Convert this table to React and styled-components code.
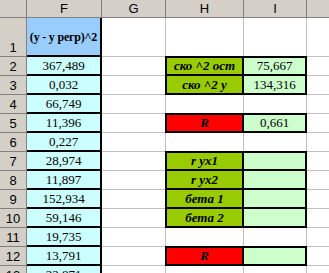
import React from "react";
import styled, { createGlobalStyle } from "styled-components";

const GlobalStyle = createGlobalStyle`
  html, body {
    margin: 0;
    padding: 0;
    overflow: hidden;
    background: #ffffff;
  }
`;

const GREEN = "#99cc00";
const RED = "#ff0000";
const MINT = "#ccffcc";
const AQUA = "#ccffff";
const SKY = "#99ccff";
const GRID = "1px solid #c0c0c0";
const THICK = "2px solid #000000";

const Sheet = styled.div`
  display: grid;
  grid-template-columns: 27px 75px 64px 78px 63px 40px;
  grid-template-rows: 18px 39px repeat(12, 19px);
  width: 347px;
  font-family: "Liberation Serif", "Times New Roman", serif;
  font-size: 13px;
  color: #000;
`;

const Head = styled.div`
  box-sizing: border-box;
  display: flex;
  justify-content: center;
  align-items: ${(p) => (p.$bottom ? "flex-end" : "center")};
  background: #d4d0c8;
  border-right: 1px solid #808080;
  border-bottom: 1px solid #808080;
  font-family: "Liberation Sans", Arial, sans-serif;
  font-size: 13px;
  line-height: 15px;
  padding-bottom: ${(p) => (p.$bottom ? "1px" : "0")};
`;

const Cell = styled.div`
  box-sizing: border-box;
  display: flex;
  justify-content: center;
  align-items: flex-end;
  border-right: ${GRID};
  border-bottom: ${GRID};
  background: ${(p) => p.$bg || "transparent"};
  white-space: nowrap;
  line-height: 16px;
`;

// column F: heavy right edge and heavy rules between the rows
const ValueCell = styled(Cell)`
  border-right: ${THICK};
  border-bottom: ${THICK};
`;

const TitleCell = styled(ValueCell)`
  align-items: center;
  font-weight: bold;
  font-size: 12px;
  letter-spacing: -0.2px;
`;

// columns H and I: boxed result blocks; the outer top/left rule is
// half border, half shadow laid over the neighbour's grid line
const BoxCell = styled(Cell)`
  border-right: ${THICK};
  border-bottom: ${THICK};
  border-top: ${(p) => (p.$top ? "1px solid #000" : "none")};
  border-left: ${(p) => (p.$left ? "1px solid #000" : "none")};
  box-shadow: ${(p) =>
    [
      p.$top && "0 -1px 0 #000",
      p.$left && "-1px 0 0 #000",
      p.$top && p.$left && "-1px -1px 0 #000",
    ]
      .filter(Boolean)
      .join(", ") || "none"};
  font-weight: ${(p) => (p.$label ? "bold" : "normal")};
  font-style: ${(p) => (p.$label ? "italic" : "normal")};
`;

const rows = [
  { n: 2, f: "367,489", h: "ско ^2 ост", hc: GREEN, i: "75,667", top: true },
  { n: 3, f: "0,032", h: "ско ^2 y", hc: GREEN, i: "134,316" },
  { n: 4, f: "66,749" },
  { n: 5, f: "11,396", h: "R", hc: RED, i: "0,661", top: true },
  { n: 6, f: "0,227" },
  { n: 7, f: "28,974", h: "r yx1", hc: GREEN, i: "", top: true },
  { n: 8, f: "11,897", h: "r yx2", hc: GREEN, i: "" },
  { n: 9, f: "152,934", h: "бета 1", hc: GREEN, i: "" },
  { n: 10, f: "59,146", h: "бета 2", hc: GREEN, i: "" },
  { n: 11, f: "19,735" },
  { n: 12, f: "13,791", h: "R", hc: RED, i: "", top: true },
  { n: 13, f: "22,871" },
];

export default function App() {
  return (
    <>
      <GlobalStyle />
      <Sheet>
        <Head />
        <Head>F</Head>
        <Head>G</Head>
        <Head>H</Head>
        <Head>I</Head>
        <Head />

        <Head $bottom>1</Head>
        <TitleCell $bg={SKY}>(y - y регр)^2</TitleCell>
        <Cell />
        <Cell />
        <Cell />
        <Cell />

        {rows.map((r) => (
          <React.Fragment key={r.n}>
            <Head>{r.n}</Head>
            <ValueCell $bg={AQUA}>{r.f}</ValueCell>
            <Cell />
            {r.h ? (
              <>
                <BoxCell $label $left $top={r.top} $bg={r.hc}>
                  {r.h}
                </BoxCell>
                <BoxCell $top={r.top} $bg={MINT}>
                  {r.i}
                </BoxCell>
              </>
            ) : (
              <>
                <Cell />
                <Cell />
              </>
            )}
            <Cell />
          </React.Fragment>
        ))}
      </Sheet>
    </>
  );
}
